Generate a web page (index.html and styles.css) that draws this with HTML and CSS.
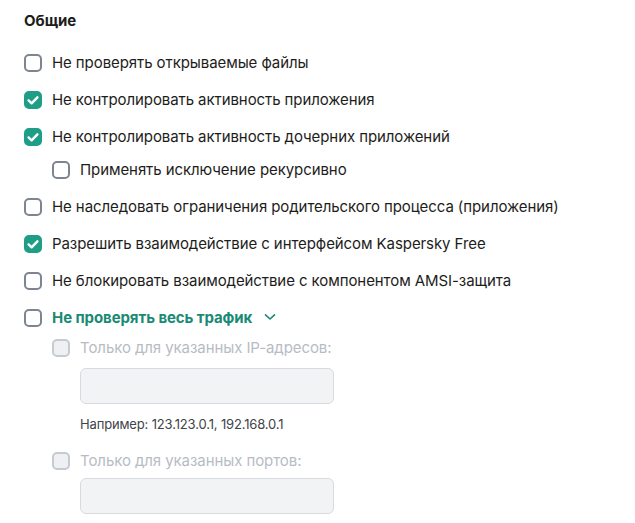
FILE: index.html
```html
<!DOCTYPE html>
<html lang="ru">
<head>
<meta charset="utf-8">
<link rel="stylesheet" href="styles.css">
</head>
<body>
<div class="page">
  <h2 class="title">Общие</h2>
  <ul class="list">
    <li class="row"><span class="cb"></span><span class="label">Не проверять открываемые файлы</span></li>
    <li class="row"><span class="cb checked"><svg viewBox="0 0 18 18"><path d="M4.6 9.4l3 2.9 5.8-6"/></svg></span><span class="label">Не контролировать активность приложения</span></li>
    <li class="row"><span class="cb checked"><svg viewBox="0 0 18 18"><path d="M4.6 9.4l3 2.9 5.8-6"/></svg></span><span class="label">Не контролировать активность дочерних приложений</span></li>
    <li class="row sub"><span class="cb"></span><span class="label">Применять исключение рекурсивно</span></li>
    <li class="row"><span class="cb"></span><span class="label">Не наследовать ограничения родительского процесса (приложения)</span></li>
    <li class="row"><span class="cb checked"><svg viewBox="0 0 18 18"><path d="M4.6 9.4l3 2.9 5.8-6"/></svg></span><span class="label">Разрешить взаимодействие с интерфейсом Kaspersky Free</span></li>
    <li class="row"><span class="cb"></span><span class="label">Не блокировать взаимодействие с компонентом AMSI-защита</span></li>
    <li class="row"><span class="cb"></span><span class="label link">Не проверять весь трафик</span><svg class="chev" viewBox="0 0 12 8"><path d="M1.5 1.8l4.5 4.2 4.5-4.2"/></svg></li>
  </ul>
  <div class="nested">
    <div class="row disabled"><span class="cb"></span><span class="label">Только для указанных IP-адресов:</span></div>
    <div class="field"><div class="input"></div><div class="hint">Например: 123.123.0.1, 192.168.0.1</div></div>
    <div class="row disabled"><span class="cb"></span><span class="label">Только для указанных портов:</span></div>
    <div class="field tight"><div class="input"></div></div>
  </div>
</div>
</body>
</html>
```
FILE: styles.css
```css
html, body { margin: 0; padding: 0; background: #fff; }
body { font-family: Inter, "Noto Sans", sans-serif; color: #1d1d1b; }
.page { padding: 11px 24px 0 24px; }
.title { margin: 0; font-size: 15px; font-weight: 700; line-height: 20px; }
.list { list-style: none; margin: 0; padding: 0; margin-top: 21px; display: flex; flex-direction: column; gap: 15px; }
.row { display: flex; align-items: center; height: 22px; font-size: 15px; letter-spacing: -0.08px; }
.row.sub { padding-left: 28px; margin-top: -4px; }
.cb { width: 18px; height: 18px; box-sizing: border-box; border: 2px solid #7d8591; border-radius: 5px; flex: none; display: flex; align-items: center; justify-content: center; }
.cb.checked { background: #1f9e87; border-color: #1f9e87; }
.cb svg { width: 18px; height: 18px; flex: none; fill: none; stroke: #fff; stroke-width: 2.4; stroke-linecap: round; stroke-linejoin: round; }
.label { margin-left: 10px; line-height: 22px; white-space: nowrap; }
.link { color: #1a8a75; font-weight: 700; }
.chev { width: 12px; height: 8px; margin-left: 12px; margin-top: -3px; fill: none; stroke: #1a8a75; stroke-width: 1.6; stroke-linecap: round; stroke-linejoin: round; }
.nested { padding-left: 28px; margin-top: 8px; }
.disabled .cb { background: #eef0f4; border-color: #c6cad1; }
.disabled .label { color: #b7bcc4; }
.field { padding-left: 28px; margin-top: 9px; }
.field.tight { margin-top: 6px; }
.input { width: 254px; height: 36px; box-sizing: border-box; background: #f2f3f5; border: 1px solid #d7dadf; border-radius: 6px; }
.hint { font-size: 13px; letter-spacing: -0.15px; color: #3f434a; margin: 12px 0 18px; line-height: 16px; }
```
